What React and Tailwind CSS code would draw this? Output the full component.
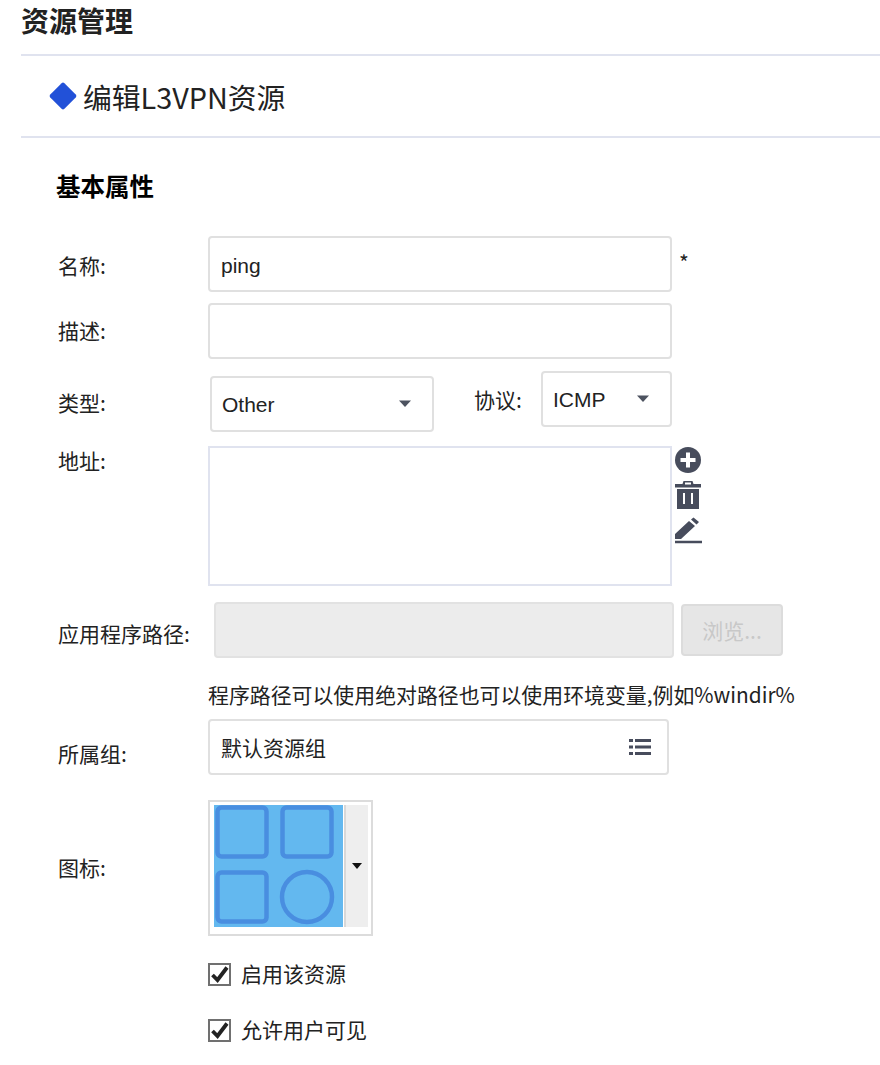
const cjk = "font-['Noto_Sans_CJK_SC','Noto_Sans',sans-serif]";
const ctl = "font-['Liberation_Sans','Noto_Sans_CJK_SC',sans-serif]";

function Label({ children, className = "w-[208px]" }) {
  return <div className={`shrink-0 pl-[58px] text-[21px] leading-[28px] text-[#222] whitespace-nowrap ${className}`}>{children}</div>;
}

function Caret() {
  return (
    <svg width="14" height="8" viewBox="0 0 14 8"><path d="M1 0.5h12L7 7z" fill="#4d5360" /></svg>
  );
}

function Check() {
  return (
    <div className="w-[23px] h-[23px] border-[2px] border-[#707070] bg-white flex items-center justify-center">
      <svg width="19" height="19" viewBox="0 0 19 19"><path d="M2.500 10l5 5L17 2.500" fill="none" stroke="#222" strokeWidth="3.800" /></svg>
    </div>
  );
}

export default function App() {
  return (
    <div className={`w-[880px] h-[1065px] bg-white overflow-hidden pl-[21px] text-[#222] ${cjk}`}>
      <div className="h-[54px] text-[28px] leading-[40px] font-bold text-[#222]">资源管理</div>
      <div className="h-[2px] bg-[#e0e3ef]" />
      <div className="h-[80px] flex items-center pl-[28px]">
        <div className="w-[28px] h-[28px] flex items-center justify-center mr-[6px]">
          <div className="w-[20px] h-[20px] rotate-45 rounded-[2px] bg-[#2251d8]" />
        </div>
        <div className="mt-[2px] text-[28.800px] leading-[40px] text-[#222]">编辑L3VPN资源</div>
      </div>
      <div className="h-[2px] bg-[#e0e3ef]" />

      <div className="-ml-[21px]">
        <div className="mt-[31px] h-[36px] pl-[56px] text-[24.500px] leading-[34px] font-bold text-black">基本属性</div>

        <div className="mt-[31px] flex items-center">
          <Label className="w-[208px] mt-[2px]">名称:</Label>
          <input readOnly defaultValue="ping" className={`w-[464px] h-[56px] border-[2px] border-[#e0e0e0] rounded-[4px] pl-[11px] pt-[3px] text-[21px] text-[#222] outline-none ${ctl}`} />
          <div className="ml-[7px] -mt-[4px] text-[21px] leading-[24px] text-[#222]">*</div>
        </div>

        <div className="mt-[11px] flex items-center">
          <Label className="w-[208px] -mt-[2px]">描述:</Label>
          <input readOnly className="w-[464px] h-[56px] border-[2px] border-[#e0e0e0] rounded-[4px] px-[11px] text-[21px] outline-none" />
        </div>

        <div className="mt-[12px] flex items-start">
          <Label className="w-[210px] mt-[17px]">类型:</Label>
          <div className={`mt-[5px] w-[224px] h-[56px] border-[2px] border-[#e0e0e0] rounded-[4px] pl-[11px] pr-[20px] flex items-center justify-between text-[21px] text-[#222] ${ctl}`}>
            <span className="mt-[1px] -ml-[1px]">Other</span><span className="-mt-[1px] flex"><Caret /></span>
          </div>
          <div className="ml-[40px] mt-[14px] w-[67px] text-[21px] leading-[28px] text-[#222] whitespace-nowrap">协议:</div>
          <div className={`w-[131px] h-[56px] border-[2px] border-[#e0e0e0] rounded-[4px] pl-[10px] pr-[20px] flex items-center justify-between text-[21px] text-[#222] ${ctl}`}>
            <span className="mt-[2px]">ICMP</span><span className="-mt-[1px] flex"><Caret /></span>
          </div>
        </div>

        <div className="mt-[14px] flex items-start">
          <Label>地址:</Label>
          <div className="w-[464px] h-[140px] border-[2px] border-[#e0e3ef]" />
          <div className="ml-[2px] flex flex-col">
            <svg width="28" height="28" viewBox="0 0 28 28">
              <circle cx="14" cy="14" r="13" fill="#474c5c" />
              <path d="M14 6.500v15M6.500 14h15" stroke="#fff" strokeWidth="4" />
            </svg>
            <svg className="mt-[7px]" width="28" height="28" viewBox="0 0 28 28">
              <path d="M1 3h7.500l1-3h9l1 3H27v3.500H1zM3 8h22v21H3z" fill="#474c5c" fillRule="evenodd" />
              <path d="M10 12v11M18 12v11M11 2.500h6" stroke="#fff" strokeWidth="2" />
            </svg>
            <svg className="mt-[7px]" width="28" height="28" viewBox="0 0 28 28">
              <path d="M1 23v-5L15 5l6 5L7 23zM17 3.500L19.500 1.500l5.500 4.500L22.500 8.500z" fill="#474c5c" />
              <path d="M1 26h27" stroke="#474c5c" strokeWidth="2.500" />
            </svg>
          </div>
        </div>

        <div className="mt-[16px] flex items-center">
          <Label className="w-[214px] mt-[6px]">应用程序路径:</Label>
          <div className="w-[460px] h-[56px] border-[2px] border-[#e2e2e2] rounded-[4px] bg-[#ececec]" />
          <div className="ml-[7px] w-[102px] h-[52px] border-[2px] border-[#dcdcdc] rounded-[4px] bg-[#e6e6e6] flex items-center justify-center pt-[1px] text-[21px] text-[#c8c8c8]">浏览...</div>
        </div>

        <div className="mt-[22px] pl-[208px] text-[20.900px] leading-[28px] text-[#222] whitespace-nowrap">程序路径可以使用绝对路径也可以使用环境变量,例如%windir%</div>

        <div className="mt-[11px] flex items-start">
          <Label className="w-[208px] mt-[20px]">所属组:</Label>
          <div className="w-[461px] h-[56px] border-[2px] border-[#e0e0e0] rounded-[4px] pl-[11px] pr-[15px] flex items-center justify-between text-[21px] text-[#222]">
            <span className="mt-[2px]">默认资源组</span>
            <svg width="24" height="18" viewBox="0 0 24 18">
              <path d="M1 1h4v3H1zM1 7.500h4v3H1zM1 14h4v3H1z" fill="#474c5c" />
              <path d="M7 1h16v3H7zM7 7.500h16v3H7zM7 14h16v3H7z" fill="#474c5c" />
            </svg>
          </div>
        </div>

        <div className="mt-[25px] flex items-center">
          <Label className="w-[208px] -mt-[2px]">图标:</Label>
          <div className="w-[165px] h-[136px] border-[2px] border-[#dcdcdc] pl-[4px] pt-[3px] flex items-start">
            <svg className="block" width="129" height="122" viewBox="0 0 129 122">
              <defs><filter id="soft"><feGaussianBlur stdDeviation="0.700" /></filter></defs>
              <rect width="129" height="122" fill="#63b8ef" />
              <g fill="none" stroke="#4a8ee0" strokeWidth="4.500" filter="url(#soft)">
                <rect x="3.500" y="2.500" width="49" height="49" rx="4" />
                <rect x="68.500" y="2.500" width="49" height="49" rx="4" />
                <rect x="3.500" y="67.500" width="49" height="49" rx="4" />
                <circle cx="93" cy="92" r="25" />
              </g>
            </svg>
            <div className="ml-[1px] w-[24px] h-[122px] bg-[#eeeeee] border-l-[2px] border-[#d8d8d8] flex items-center justify-center">
              <svg width="10" height="6" viewBox="0 0 10 6"><path d="M0 0h10L5 6z" fill="#111" /></svg>
            </div>
          </div>
        </div>

        <div className="mt-[27px] pl-[208px] flex items-center h-[23px]">
          <Check />
          <span className="ml-[10px] -mt-[3px] text-[21px] leading-[28px] text-[#222]">启用该资源</span>
        </div>
        <div className="mt-[33px] pl-[208px] flex items-center h-[23px]">
          <Check />
          <span className="ml-[10px] -mt-[3px] text-[21px] leading-[28px] text-[#222]">允许用户可见</span>
        </div>
      </div>
    </div>
  );
}
